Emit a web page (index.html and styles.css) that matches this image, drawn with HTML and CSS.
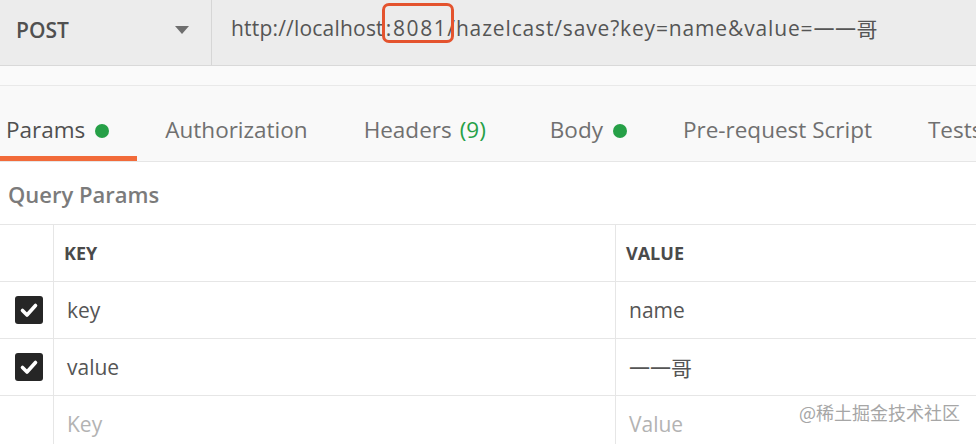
FILE: index.html
```html
<!DOCTYPE html>
<html lang="en">
<head>
<meta charset="utf-8">
<title>Postman request</title>
<link rel="stylesheet" href="styles.css">
</head>
<body>
<div class="app">
  <div class="request-bar">
    <div class="method">
      <span class="method-name">POST</span>
      <span class="caret"></span>
    </div>
    <div class="url"><span class="head-part">http://localhost</span><span class="mark">:8081</span><span class="rest">/hazelcast/save?key=name&amp;value=</span><span class="cjk">一一哥</span></div>
  </div>
  <div class="spacer"></div>
  <div class="tabs">
    <div class="tab active">Params <span class="dot"></span></div>
    <div class="tab">Authorization</div>
    <div class="tab">Headers <span class="count">(9)</span></div>
    <div class="tab">Body <span class="dot"></span></div>
    <div class="tab">Pre-request Script</div>
    <div class="tab">Tests</div>
  </div>
  <div class="section-title">Query Params</div>
  <div class="table">
    <div class="row head">
      <div class="cell check"></div>
      <div class="cell key">KEY</div>
      <div class="cell val">VALUE</div>
    </div>
    <div class="row">
      <div class="cell check"><span class="box"><svg viewBox="0 0 28 28" width="28" height="28"><polyline points="7.5,14.5 12,19 20.5,9.5" fill="none" stroke="#fff" stroke-width="3.6" stroke-linecap="round" stroke-linejoin="round"/></svg></span></div>
      <div class="cell key">key</div>
      <div class="cell val">name</div>
    </div>
    <div class="row">
      <div class="cell check"><span class="box"><svg viewBox="0 0 28 28" width="28" height="28"><polyline points="7.5,14.5 12,19 20.5,9.5" fill="none" stroke="#fff" stroke-width="3.6" stroke-linecap="round" stroke-linejoin="round"/></svg></span></div>
      <div class="cell key">value</div>
      <div class="cell val"><span class="cjk">一一哥</span></div>
    </div>
    <div class="row">
      <div class="cell check"></div>
      <div class="cell key placeholder">Key</div>
      <div class="cell val placeholder">Value</div>
    </div>
  </div>
  <div class="watermark">@稀土掘金技术社区</div>
</div>
</body>
</html>
```
FILE: styles.css
```css
html, body {
  margin: 0;
  padding: 0;
  background: #ffffff;
}
body {
  font-family: "Open Sans", "Noto Sans CJK SC", sans-serif;
  color: #505050;
  width: 976px;
  height: 444px;
  overflow: hidden;
}
.app {
  position: relative;
  width: 976px;
  height: 444px;
  overflow: hidden;
}
.cjk {
  font-family: "Noto Sans CJK SC", sans-serif;
  font-weight: 400;
}
.request-bar {
  display: flex;
  height: 65px;
  background: #ececec;
  border-bottom: 1px solid #d9d9d9;
}
.method {
  width: 212px;
  box-sizing: border-box;
  border-right: 1px solid #d6d6d6;
  display: flex;
  align-items: center;
  padding-left: 16px;
  padding-bottom: 6px;
}
.method-name {
  font-size: 21px;
  font-weight: 600;
  color: #505050;
  flex: 1;
}
.caret {
  width: 0;
  height: 0;
  border-left: 7px solid transparent;
  border-right: 7px solid transparent;
  border-top: 8px solid #6e6e6e;
  margin-right: 22px;
}
.url {
  padding-left: 19px;
  display: flex;
  align-items: center;
  font-size: 21px;
  color: #555555;
  padding-bottom: 10px;
  white-space: nowrap;
  letter-spacing: 0.2px;
}
.mark {
  position: relative;
  letter-spacing: 1.6px;
  padding-left: 2px;
}
.mark::after {
  content: "";
  position: absolute;
  left: -2px;
  right: -7px;
  top: -11px;
  bottom: -1px;
  border: 3px solid #e4532e;
  border-radius: 7px;
}
.rest {
  letter-spacing: 0.85px;
}
.url .cjk {
  letter-spacing: 0.5px;
}
.spacer {
  height: 19px;
  background: #fafafa;
  border-bottom: 1px solid #e9e9e9;
}
.tabs {
  display: flex;
  height: 75px;
  background: #f9f9f9;
  border-bottom: 1px solid #e6e6e6;
  margin-left: -22px;
  white-space: nowrap;
}
.tab {
  box-sizing: border-box;
  height: 75px;
  padding: 30px 28px 0;
  line-height: 28px;
  font-size: 22.5px;
  color: #707070;
  border-bottom: 5px solid transparent;
  display: flex;
  align-items: flex-start;
  gap: 10px;
}
.tab.active {
  color: #505050;
  border-bottom-color: #f26b3a;
}
.dot {
  width: 14px;
  height: 14px;
  border-radius: 50%;
  background: #26a047;
  margin-top: 8px;
}
.count {
  color: #26a047;
  margin-left: -2px;
  margin-right: 8px;
}
.section-title {
  padding: 18px 8px 16px;
  line-height: 28px;
  font-size: 22px;
  font-weight: 600;
  color: #7b7b7b;
}
.table {
  border-top: 1px solid #e6e6e6;
}
.row {
  display: grid;
  grid-template-columns: 54px 562px 1fr;
  height: 56px;
  border-bottom: 1px solid #e6e6e6;
}
.cell {
  display: flex;
  align-items: center;
  font-size: 21px;
  color: #555555;
  padding-left: 13px;
}
.cell.check {
  border-right: 1px solid #e6e6e6;
  padding-left: 15px;
}
.cell.key {
  border-right: 1px solid #e6e6e6;
}
.row.head .cell {
  font-size: 18px;
  font-weight: 700;
  color: #4a4a4a;
  padding-left: 10px;
}
.row.head .cell.check {
  padding-left: 0;
}
.placeholder {
  color: #b3b3b3;
}
.box {
  width: 28px;
  height: 28px;
  border-radius: 3px;
  background: #262626;
  display: flex;
}
.watermark {
  position: absolute;
  right: 16px;
  top: 400px;
  font-family: "Noto Sans CJK SC", sans-serif;
  font-size: 18px;
  line-height: 24px;
  color: #a6a6a6;
  white-space: nowrap;
}
```
